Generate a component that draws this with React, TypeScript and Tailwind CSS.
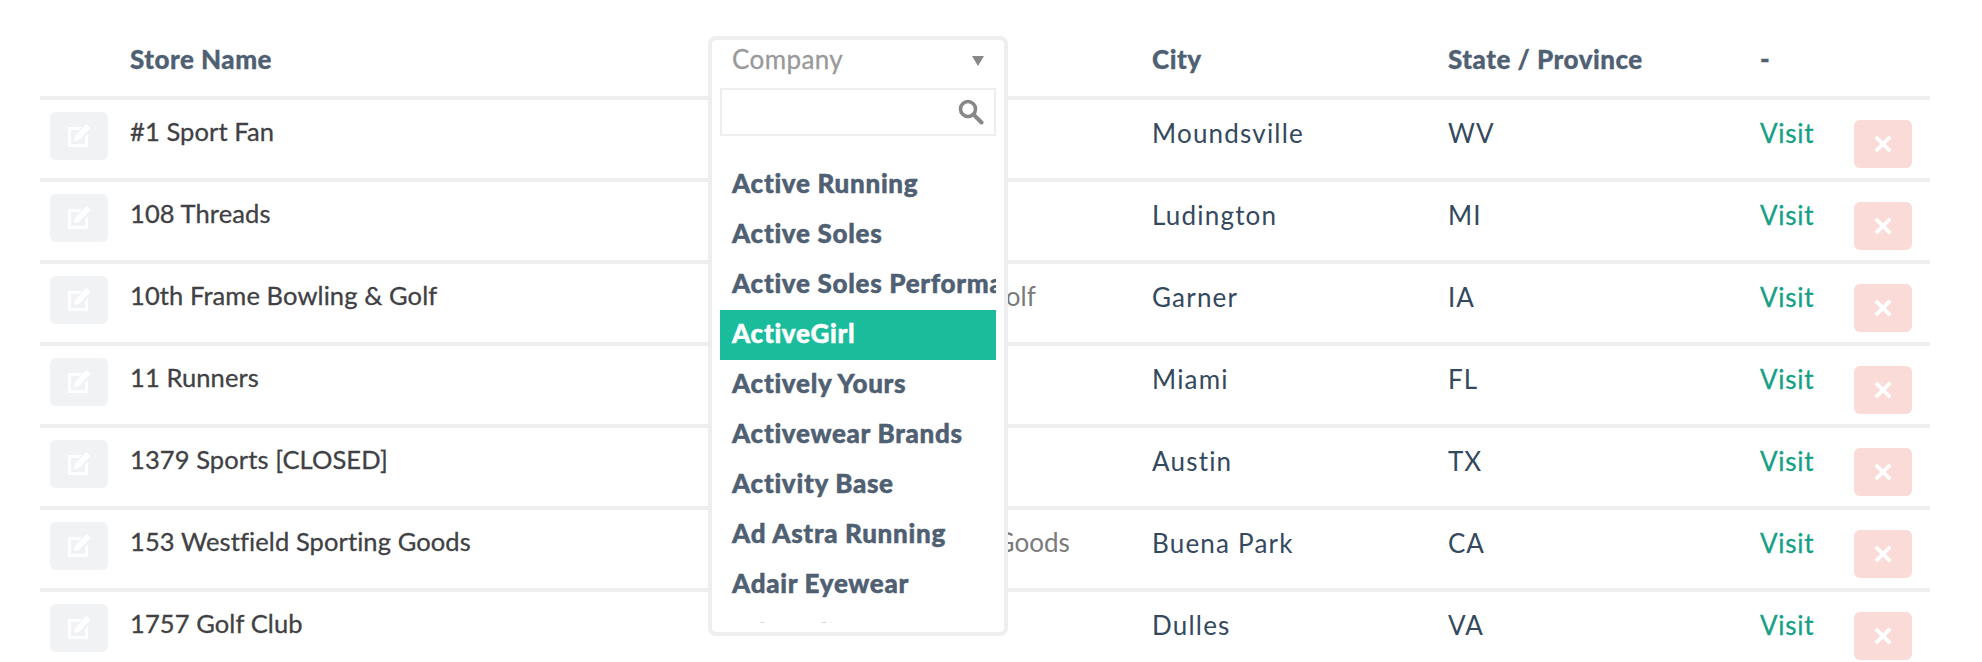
const rows = [
  { name: "#1 Sport Fan", company: "", city: "Moundsville", state: "WV" },
  { name: "108 Threads", company: "", city: "Ludington", state: "MI" },
  { name: "10th Frame Bowling & Golf", company: "10th Frame Bowling & Golf", city: "Garner", state: "IA" },
  { name: "11 Runners", company: "", city: "Miami", state: "FL" },
  { name: "1379 Sports [CLOSED]", company: "", city: "Austin", state: "TX" },
  { name: "153 Westfield Sporting Goods", company: "153 Westfield Sporting Goods", city: "Buena Park", state: "CA" },
  { name: "1757 Golf Club", company: "", city: "Dulles", state: "VA" },
];

const companies = [
  "Active Running",
  "Active Soles",
  "Active Soles Performance",
  "ActiveGirl",
  "Actively Yours",
  "Activewear Brands",
  "Activity Base",
  "Ad Astra Running",
  "Adair Eyewear",
  "Adrenaline Sports",
];

function EditIcon() {
  return (
    <svg width="24" height="24" viewBox="0 0 24 24" fill="none">
      <path d="M1 3h14l-3 3H4v14h14v-7l3-3v13H1z" fill="#fff" />
      <path d="M19.5 0l4 4L12 16l-5 1 1-5z" fill="#fff" />
    </svg>
  );
}

function CloseIcon() {
  return (
    <svg width="18" height="18" viewBox="0 0 18 18" fill="none">
      <path d="M1.8 1.8l14.4 14.4M16.2 1.8L1.8 16.2" stroke="#fff" strokeWidth="3.8" />
    </svg>
  );
}

function SearchIcon() {
  return (
    <svg width="26" height="26" viewBox="0 0 26 26" fill="none">
      <circle cx="10" cy="10" r="7.5" stroke="#888" strokeWidth="3.6" />
      <path d="M15.5 15.5l8 8" stroke="#888" strokeWidth="4" strokeLinecap="round" />
    </svg>
  );
}

function CompanySelect() {
  return (
    <div className="absolute left-[708px] top-[36px] z-10 h-[600px] w-[300px] overflow-hidden rounded-[8px] border-4 border-[#eeeeee] bg-white">
      <div className="flex h-[48px] items-start justify-between pl-[20px] pr-[20px] pt-[3px]">
        <span className="text-[26px] leading-[32px] tracking-[0.4px] text-[#999999] [-webkit-text-stroke:0.3px_#999999]">Company</span>
        <span className="mt-[13px] h-0 w-0 border-x-[6px] border-t-[10px] border-x-transparent border-t-[#888888]" />
      </div>
      <div className="mx-[8px] flex h-[48px] items-center justify-end border-2 border-[#eeeeee] pr-[10px]">
        <SearchIcon />
      </div>
      <div className="mx-[8px] mt-[24px] h-[463px] overflow-hidden">
        {companies.map((c) => (
          <div
            key={c}
            className={`h-[50px] overflow-hidden whitespace-nowrap pl-[12px] text-[26px] font-black leading-[46px] tracking-[0.7px] [-webkit-text-stroke:0.5px_currentColor] ${c === "ActiveGirl" ? "bg-[#1abc9c] text-white" : "text-[#4f6073]"}`}
          >
            {c}
          </div>
        ))}
      </div>
    </div>
  );
}

const cols = "grid grid-cols-[90px_595px_427px_296px_312px_auto]";

export default function App() {
  return (
    <div className="relative h-[662px] overflow-hidden bg-white font-['Lato',sans-serif]">
      <div className="ml-[40px] w-[1890px]">
        <div className={`${cols} h-[100px] whitespace-nowrap border-b-4 border-[#eeeeee] pt-[43px] text-[26px] font-black leading-[32px] tracking-[0.5px] text-[#4f6073] [-webkit-text-stroke:0.3px_#4f6073]`}>
          <div />
          <div>Store Name</div>
          <div />
          <div>City</div>
          <div>State / Province</div>
          <div>-</div>
        </div>
        {rows.map((r) => (
          <div key={r.name} className={`${cols} h-[82px] whitespace-nowrap border-b-4 border-[#eeeeee] text-[26px] leading-[32px]`}>
            <div className="pl-[10px] pt-[12px]">
              <button className="flex h-[48px] w-[58px] items-center justify-center rounded-[6px] bg-[#f0f2f4]">
                <EditIcon />
              </button>
            </div>
            <div className="pt-[15px] text-[25.5px] tracking-[0.1px] text-[#3f4144] [-webkit-text-stroke:0.3px_#3f4144]">{r.name}</div>
            <div className="pt-[16px] text-[#7a7a7a]">{r.company}</div>
            <div className="pt-[17px] tracking-[1.2px] text-[#34495e]">{r.city}</div>
            <div className="pt-[17px] tracking-[1px] text-[#34495e]">{r.state}</div>
            <div className="flex justify-between pr-[18px]">
              <a className="pt-[17px] tracking-[0.7px] text-[#16a085] [-webkit-text-stroke:0.3px_#16a085]">Visit</a>
              <button className="mt-[20px] flex h-[48px] w-[58px] items-center justify-center rounded-[6px] bg-[#fadbd8]">
                <CloseIcon />
              </button>
            </div>
          </div>
        ))}
      </div>
      <CompanySelect />
    </div>
  );
}
